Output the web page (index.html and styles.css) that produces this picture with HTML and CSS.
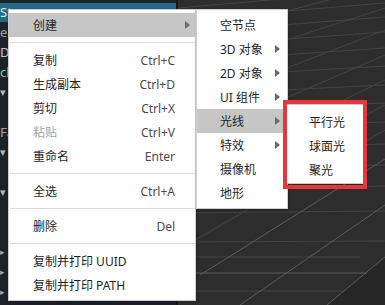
FILE: index.html
```html
<!DOCTYPE html>
<html>
<head lang="zh">
    <meta charset="UTF-8">
    <title>右键菜单</title>
    <link rel="stylesheet" href="styles.css">
</head>
<body>
<div class="editor">
    <div class="hierarchy">
        <div class="node node-sel">St</div>
        <div class="node node-dim">eD</div>
        <div class="node">Di</div>
        <div class="node node-green">ch</div>
        <div class="node node-tri">▾</div>
        <div class="node"></div>
        <div class="node node-dim">Fa</div>
        <div class="node node-tri">▾</div>
        <div class="node"></div>
        <div class="node node-tri">▾</div>
        <div class="node"></div>
        <div class="node"></div>
        <div class="node node-dot">▸</div>
        <div class="node node-dot">▸</div>
        <div class="node node-dot">▸</div>
    </div>
    <div class="divider"></div>
    <div class="scene">
        <svg width="207" height="305" viewBox="178 0 207 305">
            <polygon points="327,305 385,257 385,305" fill="#262626"/>
            <g stroke="#444" stroke-width="1" fill="none">
                <line x1="178" y1="8" x2="385" y2="-10"/>
                <line x1="178" y1="20" x2="385" y2="3"/>
                <line x1="178" y1="33" x2="385" y2="17"/>
                <line x1="178" y1="47" x2="385" y2="32"/>
                <line x1="178" y1="62" x2="385" y2="48"/>
                <line x1="178" y1="78" x2="385" y2="66"/>
                <line x1="178" y1="95" x2="385" y2="85"/>
                <line x1="178" y1="112" x2="385" y2="103"/>
                <line x1="178" y1="130" x2="385" y2="122"/>
                <line x1="178" y1="150" x2="385" y2="144"/>
                <line x1="178" y1="170" x2="385" y2="165"/>
                <line x1="178" y1="190" x2="385" y2="186"/>
                <line x1="178" y1="213" x2="385" y2="211"/>
                <line x1="178" y1="242" x2="385" y2="241"/>
                <line x1="178" y1="257" x2="360" y2="257"/>
                <line x1="178" y1="291" x2="345" y2="291"/>
                <line x1="178" y1="40" x2="385" y2="-15"/>
                <line x1="178" y1="75" x2="385" y2="8"/>
                <line x1="178" y1="110" x2="385" y2="30"/>
                <line x1="178" y1="145" x2="385" y2="55"/>
                <line x1="178" y1="180" x2="385" y2="80"/>
                <line x1="178" y1="215" x2="385" y2="105"/>
                <line x1="178" y1="250" x2="385" y2="130"/>
            </g>
            <g stroke="#5c5c5c" stroke-width="1" fill="none">
                <line x1="178" y1="273" x2="367" y2="273"/>
                <line x1="200" y1="275" x2="385" y2="159"/>
                <line x1="240" y1="305" x2="385" y2="205"/>
                <line x1="327" y1="305" x2="385" y2="257"/>
            </g>
        </svg>
    </div>
</div>

<div class="menu menu-main">
    <div class="item item-hover item-sub"><span>创建</span><i class="arrow"></i></div>
    <div class="sep"></div>
    <div class="item"><span>复制</span><span class="key">Ctrl+C</span></div>
    <div class="item"><span>生成副本</span><span class="key">Ctrl+D</span></div>
    <div class="item"><span>剪切</span><span class="key">Ctrl+X</span></div>
    <div class="item item-off"><span>粘贴</span><span class="key">Ctrl+V</span></div>
    <div class="item"><span>重命名</span><span class="key">Enter</span></div>
    <div class="sep"></div>
    <div class="item"><span>全选</span><span class="key">Ctrl+A</span></div>
    <div class="sep"></div>
    <div class="item"><span>删除</span><span class="key">Del</span></div>
    <div class="sep"></div>
    <div class="item"><span>复制并打印 UUID</span></div>
    <div class="item"><span>复制并打印 PATH</span></div>
</div>

<div class="menu menu-create">
    <div class="item"><span>空节点</span></div>
    <div class="item item-sub"><span>3D 对象</span><i class="arrow"></i></div>
    <div class="item item-sub"><span>2D 对象</span><i class="arrow"></i></div>
    <div class="item item-sub"><span>UI 组件</span><i class="arrow"></i></div>
    <div class="item item-hover item-sub"><span>光线</span><i class="arrow"></i></div>
    <div class="item item-sub"><span>特效</span><i class="arrow"></i></div>
    <div class="item"><span>摄像机</span></div>
    <div class="item"><span>地形</span></div>
</div>

<div class="menu menu-light">
    <div class="item"><span>平行光</span></div>
    <div class="item"><span>球面光</span></div>
    <div class="item"><span>聚光</span></div>
</div>
<div class="mark"></div>
</body>
</html>
```

FILE: styles.css
```css
html, body {
    margin: 0px;
    padding: 0px;
    width: 385px;
    height: 305px;
    overflow: hidden;
}
body {
    font-family: "Noto Sans", "Noto Sans CJK SC", sans-serif;
    background: #2d2d2d;
}
.editor {
    display: flex;
    height: 305px;
}
.hierarchy {
    width: 176px;
    padding-top: 3px;
    background: #1f2128;
    box-sizing: border-box;
}
.node {
    height: 20px;
    line-height: 20px;
    font-size: 13px;
    color: #c8c8c8;
    white-space: nowrap;
    overflow: hidden;
}
.node-sel {
    height: 19px;
    line-height: 19px;
    background: #1e6a88;
    color: #e4ecf0;
}
.node-dim {
    color: #9fa4aa;
}
.node-green {
    color: #7fd67f;
}
.node-tri {
    font-size: 11px;
    color: #b5b8bc;
}
.node-dot {
    font-size: 9px;
    color: #a0a4a8;
}
.divider {
    width: 2px;
    background: #17181c;
}
.scene {
    flex: 1;
    background: #2d2d2d;
    overflow: hidden;
}
.scene svg {
    display: block;
}

/* 右键菜单 */
.menu {
    position: absolute;
    box-sizing: border-box;
    background: #ffffff;
    border: 1px solid #cdcdcd;
    padding: 3px 0px;
    font-size: 12px;
    color: #1e1e1e;
    box-shadow: 1px 1px 3px rgba(0, 0, 0, 0.25);
}
.menu-main {
    left: 8px;
    top: 9px;
    width: 188px;
}
.menu-create {
    left: 196px;
    top: 9px;
    width: 92px;
}
.menu-light {
    left: 284px;
    top: 104px;
    width: 80px;
    padding: 5px 0px 1px 0px;
}
.item {
    display: flex;
    align-items: center;
    justify-content: space-between;
    height: 24px;
    padding: 0px 20px 0px 24px;
    white-space: nowrap;
}
.menu-create .item {
    padding: 0px 7px 0px 23px;
}
.menu-main .item-sub {
    padding-right: 5px;
}
.item-hover {
    background: #c6c6c6;
}
.item-off {
    color: #a3a3a3;
}
.key {
    color: #4a4a4a;
}
.arrow {
    width: 0px;
    height: 0px;
    border-left: 5px solid #6a6a6a;
    border-top: 4px solid transparent;
    border-bottom: 4px solid transparent;
}
.sep {
    height: 1px;
    margin: 5px 0px 5px 1px;
    background: #dadada;
}
.mark {
    position: absolute;
    left: 283px;
    top: 100px;
    width: 84px;
    height: 89px;
    box-sizing: border-box;
    border: 4px solid #e9363d;
}
```
